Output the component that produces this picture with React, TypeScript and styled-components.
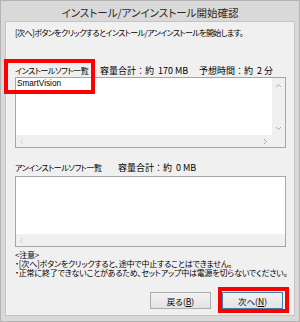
import React from 'react';
import styled, { createGlobalStyle } from 'styled-components';

const jp = '"Noto Sans CJK JP", "Liberation Sans", sans-serif';

const GlobalStyle = createGlobalStyle`
  html, body {
    margin: 0;
    padding: 0;
    background: #ffffff;
  }
  body {
    font-family: ${jp};
    color: #000000;
  }
`;

const Window = styled.div`
  position: relative;
  box-sizing: border-box;
  width: 300px;
  height: 322px;
  background: #d9d9d9;
  border: 1px solid #b3b3b3;
  display: flex;
  flex-direction: column;
  padding: 0 4px 5px 4px;
`;

const TitleBar = styled.div`
  height: 20px;
  display: flex;
  align-items: center;
  justify-content: center;
  padding-top: 2px;
  box-sizing: border-box;
  font-size: 10.5px;
  color: #2a2a2a;
  font-feature-settings: 'palt';
`;

const Client = styled.div`
  flex: 1;
  box-sizing: border-box;
  background: #f0f0f0;
  border: 1px solid #c4c4c4;
  padding: 5px 8px 6px 9px;
  display: flex;
  flex-direction: column;
  font-size: 8px;
  font-feature-settings: 'palt';
`;

const Intro = styled.div`
  height: 12px;
  line-height: 12px;
  letter-spacing: -0.6px;
  white-space: nowrap;
`;

const Label = styled.div<{ $top: number; $below: number }>`
  display: flex;
  height: 12px;
  line-height: 12px;
  margin-top: ${(p) => p.$top}px;
  margin-bottom: ${(p) => p.$below}px;
  white-space: nowrap;
`;

const LabelName = styled.span<{ $w: number }>`
  width: ${(p) => p.$w}px;
  flex: none;
  letter-spacing: -0.45px;
`;

const Stat = styled.span<{ $w: number }>`
  width: ${(p) => p.$w}px;
  flex: none;
  font-size: 9px;
  font-feature-settings: normal;
`;

const ListBox = styled.div<{ $vscroll: boolean }>`
  box-sizing: border-box;
  height: 71px;
  border: 1px solid #a6a6a6;
  background: #ffffff;
  display: grid;
  grid-template-columns: 1fr ${(p) => (p.$vscroll ? '13px' : '0px')};
  grid-template-rows: 1fr 12px;
`;

const ListContent = styled.div`
  padding: 0 1px;
  font-family: "Liberation Sans", sans-serif;
  font-size: 8.2px;
  line-height: 12px;
`;

const VScroll = styled.div`
  background: #f0f0f0;
  display: flex;
  flex-direction: column;
  justify-content: space-between;
  align-items: center;
  padding: 5px 0 4px;
`;

const HScroll = styled.div<{ $span: boolean }>`
  grid-column: ${(p) => (p.$span ? '1 / span 2' : '1')};
  background: #f0f0f0;
  display: flex;
  justify-content: space-between;
  align-items: center;
  padding: 0 3px 0 2px;
`;

const Corner = styled.div`
  background: #f0f0f0;
`;

const Notes = styled.div`
  margin-top: 3px;
  line-height: 9px;
  font-size: 8px;
  letter-spacing: -0.2px;
  white-space: nowrap;
`;

const ButtonRow = styled.div`
  margin-top: auto;
  display: flex;
  justify-content: flex-end;
  gap: 11px;
  padding-right: 3px;
`;

const Button = styled.button<{ $primary?: boolean }>`
  width: 61px;
  height: 17px;
  box-sizing: border-box;
  padding: 0;
  border: 1px solid ${(p) => (p.$primary ? '#3c7fb1' : '#acacac')};
  background: linear-gradient(#f2f2f2, #e3e3e3);
  font-family: ${jp};
  font-size: 8.5px;
  color: #000000;
  font-feature-settings: 'palt';
`;

const Highlight = styled.div<{ $x: number; $y: number; $w: number; $h: number }>`
  position: absolute;
  left: ${(p) => p.$x - 1}px;
  top: ${(p) => p.$y - 1}px;
  width: ${(p) => p.$w}px;
  height: ${(p) => p.$h}px;
  box-sizing: border-box;
  border: 4px solid #ff0000;
  pointer-events: none;
`;

type Dir = 'up' | 'down' | 'left' | 'right';
const rot: Record<Dir, number> = { up: 0, right: 90, down: 180, left: 270 };

const Arrow: React.FC<{ dir: Dir; faint?: boolean }> = ({ dir, faint }) => (
  <svg width="7" height="5" viewBox="0 0 7 5" style={{ transform: `rotate(${rot[dir]}deg)` }}>
    <path d="M1 4 L3.5 1.5 L6 4" fill="none" stroke={faint ? '#cfcfcf' : '#a8a8a8'} strokeWidth="1" />
  </svg>
);

const App: React.FC = () => (
  <>
    <GlobalStyle />
    <Window>
      <TitleBar>インストール/アンインストール開始確認</TitleBar>
      <Client>
        <Intro>[次へ]ボタンをクリックするとインストール/アンインストールを開始します。</Intro>

        <Label $top={26} $below={0}>
          <LabelName $w={85}>インストールソフト一覧</LabelName>
          <Stat $w={99}>容量合計：約&nbsp;&nbsp;170 MB</Stat>
          <Stat $w={80}>予想時間：約&nbsp;&nbsp;2 分</Stat>
        </Label>
        <ListBox $vscroll>
          <ListContent>SmartVision</ListContent>
          <VScroll>
            <Arrow dir="up" />
            <Arrow dir="down" />
          </VScroll>
          <HScroll $span={false}>
            <Arrow dir="left" faint />
            <Arrow dir="right" />
          </HScroll>
          <Corner />
        </ListBox>

        <Label $top={14} $below={2}>
          <LabelName $w={103}>アンインストールソフト一覧</LabelName>
          <Stat $w={90}>容量合計：約&nbsp;&nbsp;0 MB</Stat>
        </Label>
        <ListBox $vscroll={false}>
          <ListContent />
          <div />
          <HScroll $span>
            <Arrow dir="left" faint />
          </HScroll>
        </ListBox>

        <Notes>
          &lt;注意&gt;
          <br />
          ・[次へ]ボタンをクリックすると、途中で中止することはできません。
          <br />
          ・正常に終了できないことがあるため、セットアップ中は電源を切らないでください。
        </Notes>

        <ButtonRow>
          <Button>
            戻る(<u>B</u>)
          </Button>
          <Button $primary>
            次へ(<u>N</u>)
          </Button>
        </ButtonRow>
      </Client>

      <Highlight $x={4} $y={59} $w={91} $h={35} />
      <Highlight $x={218} $y={287} $w={71} $h={26} />
    </Window>
  </>
);

export default App;
